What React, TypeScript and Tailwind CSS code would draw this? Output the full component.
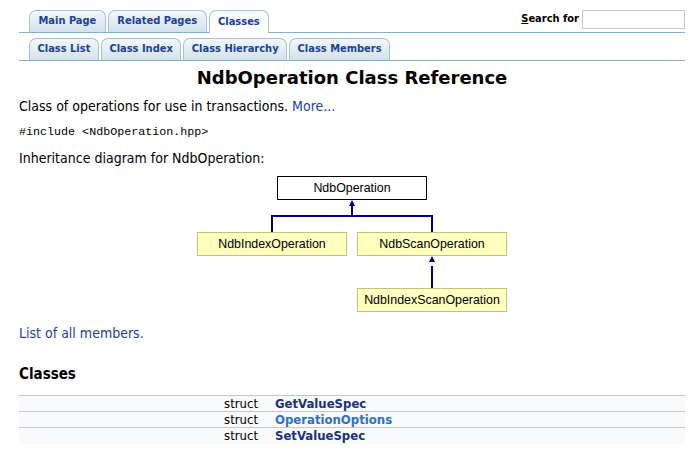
import React from 'react';

const font = { fontFamily: '"DejaVu Sans Condensed", "DejaVu Sans", sans-serif' };

type Tab = { label: string; active?: boolean };

const mainTabs: Tab[] = [
  { label: 'Main Page' },
  { label: 'Related Pages' },
  { label: 'Classes', active: true },
];

const subTabs: Tab[] = [
  { label: 'Class List' },
  { label: 'Class Index' },
  { label: 'Class Hierarchy' },
  { label: 'Class Members' },
];

const classes = [
  { name: 'GetValueSpec', visited: false },
  { name: 'OperationOptions', visited: true },
  { name: 'SetValueSpec', visited: false },
];

function TabItem({ tab, wide }: { tab: Tab; wide?: boolean }) {
  return (
    <li
      className={
        'h-[22px] flex items-center rounded-t-[7px] border border-[#a6c2d4] text-[11px] font-bold text-[#1a419d] ' +
        (wide ? 'px-[8.5px] ' : 'px-[7.5px] ') +
        (tab.active
          ? 'bg-gradient-to-b from-[#f4f9fb] to-white border-b-0 h-[23px] -mb-px'
          : 'bg-gradient-to-b from-[#f3f8fb] to-[#d3e2ec] border-b-0')
      }
    >
      {tab.label}
    </li>
  );
}

function Diagram() {
  const yellow = '#ffffc0';
  const edge = '#c2c27a';
  const blue = '#000080';
  const box = (x: number, y: number, label: string, fill: string, stroke: string) => (
    <g>
      <rect x={x + 0.5} y={y + 0.5} width={149} height={23} fill={fill} stroke={stroke} />
      <text
        x={x + 75}
        y={y + 16}
        textAnchor="middle"
        fontSize="12.4"
        fontFamily="Liberation Sans, Arial, sans-serif"
        fill="#000"
      >
        {label}
      </text>
    </g>
  );
  return (
    <svg width="310" height="137" viewBox="0 0 310 137" className="block">
      {box(80, 0, 'NdbOperation', '#ffffff', '#000')}
      <g stroke={blue} strokeWidth="2" fill="none">
        <path d="M155 27 V40 M75 56 V40 H235 V56" />
        <path d="M235 90 V112" />
      </g>
      <polygon points="155,24 152,30 158,30" fill={blue} />
      <polygon points="235,80 232,86 238,86" fill={blue} />
      {box(0, 56, 'NdbIndexOperation', yellow, edge)}
      {box(160, 56, 'NdbScanOperation', yellow, edge)}
      {box(160, 112, 'NdbIndexScanOperation', yellow, edge)}
    </svg>
  );
}

export default function App() {
  return (
    <div className="w-[692px] h-[461px] bg-white text-black overflow-hidden" style={font}>
      {/* Tabs */}
      <div className="pl-[19px] pr-[7px] pt-[10px]">
        <div className="flex items-end justify-between border-b border-[#84b0c7]">
          <ul className="flex items-end gap-[2px] pl-[10px]">
            {mainTabs.map((t) => (
              <TabItem key={t.label} tab={t} wide />
            ))}
          </ul>
          <div className="flex items-center gap-[3px] pb-[3px]">
            <span className="text-[11px] font-bold">
              <span className="underline">S</span>earch for
            </span>
            <input className="w-[103px] h-[19px] border border-[#c8c8c8] bg-white" />
          </div>
        </div>
        <div className="mt-[5px] border-b border-[#84b0c7]">
          <ul className="flex items-end gap-[2px] pl-[10px]">
            {subTabs.map((t) => (
              <TabItem key={t.label} tab={t} />
            ))}
          </ul>
        </div>
      </div>

      <div className="pl-[19px] pr-[7px]">
        <h1
          className="text-center text-[18px] font-bold mt-[6px] leading-[22px]"
          style={{ fontFamily: '"DejaVu Sans", sans-serif' }}
        >
          NdbOperation Class Reference
        </h1>
        <p className="text-[14px] mt-[8px] leading-[18px]">
          Class of operations for use in transactions. <a className="text-[#1a41a8]">More...</a>
        </p>
        <p
          className="text-[11.7px] mt-[10px] leading-[15px]"
          style={{ fontFamily: '"Liberation Mono", monospace' }}
        >
          #include &lt;NdbOperation.hpp&gt;
        </p>
        <p className="text-[14px] mt-[9px] leading-[18px]">Inheritance diagram for NdbOperation:</p>
        <div className="flex justify-center mt-[9px]">
          <Diagram />
        </div>
        <p className="text-[14px] mt-[11px] leading-[18px]">
          <a className="text-[#1a41a8]">List of all members.</a>
        </p>
        <h2 className="text-[15px] font-bold mt-[22px] leading-[20px]">Classes</h2>
        <table className="w-full mt-[11px] border-collapse text-[13px]">
          <tbody>
            {classes.map((c) => (
              <tr key={c.name} className="bg-[#f9fafc] border-t border-[#c6c6c6] h-[16px] leading-[15px]">
                <td className="text-right w-[256px] pr-[17px]">struct</td>
                <td
                  className={
                    'font-bold ' + (c.visited ? 'text-[#2b73c7]' : 'text-[#1a307f]')
                  }
                >
                  {c.name}
                </td>
              </tr>
            ))}
          </tbody>
        </table>
      </div>
    </div>
  );
}
